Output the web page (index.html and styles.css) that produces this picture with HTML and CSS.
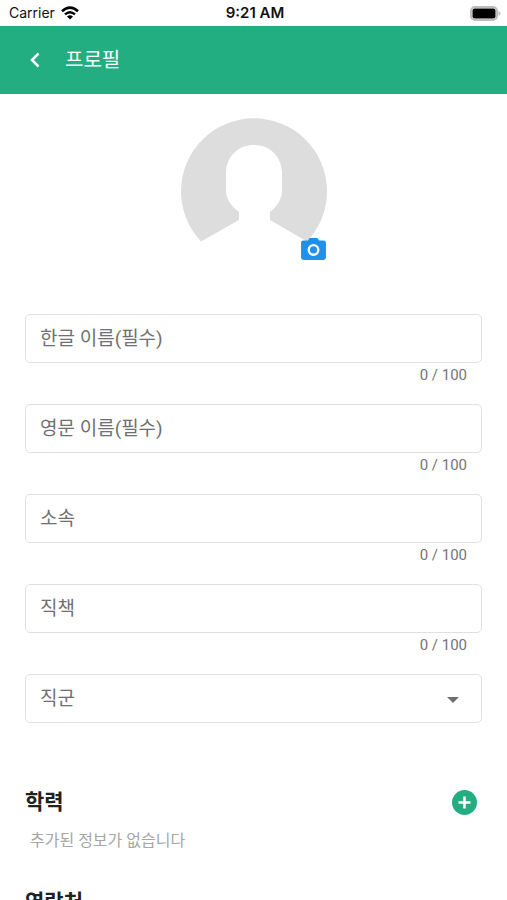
FILE: index.html
```html
<!DOCTYPE html>
<html lang="ko">
<head>
<meta charset="utf-8">
<meta name="viewport" content="width=device-width, initial-scale=1">
<title>프로필</title>
<link rel="stylesheet" href="styles.css">
</head>
<body>
<div class="app">
  <div class="status">
    <div class="carrier">
      <span>Carrier</span>
      <svg width="18" height="14" viewBox="0 0 18 14" aria-hidden="true">
        <g fill="none" stroke="#000" stroke-width="2.5">
          <path d="M1 5.200Q9-2 17 5.200"/>
          <path d="M4 8.400Q9 4 14 8.400"/>
        </g>
        <path d="M6 10.500Q9 8 12 10.500L9 13.600z"/>
      </svg>
    </div>
    <span class="time">9:21 AM</span>
    <svg class="battery" width="31" height="15" viewBox="0 0 31 15" aria-hidden="true">
      <rect x="1" y="1" width="26" height="13" rx="4" fill="#fff" stroke="#bdbdbd" stroke-width="2"/>
      <rect x="2.500" y="2.500" width="23" height="10" rx="2" fill="#000"/>
      <path d="M28.500 5q2 .8 2 2.500t-2 2.500z" fill="#bdbdbd"/>
    </svg>
  </div>
  <header class="bar">
    <button class="icon-button" type="button" aria-label="뒤로">
      <svg width="20" height="20" viewBox="0 0 20 20"><path d="M13.500 3.500L7 10l6.500 6.500" fill="none" stroke="#fff" stroke-width="2.500"/></svg>
    </button>
    <h1>프로필</h1>
  </header>
  <main>
    <div class="avatar">
      <svg width="148" height="148" viewBox="0 0 148 148" aria-hidden="true">
        <path fill="#ddd" d="M21 123.500A73 73 0 1 1 127 123.500L90 102V94C98 87 102 81 102 73V54C101 37 89 27 74 27S47 37 46 54V73C46 81 51 88 59 94V102Z"/>
      </svg>
      <button class="icon-button photo" type="button" aria-label="사진 변경">
        <svg width="25" height="22" viewBox="0 0 26 23">
          <path fill="#1f91ed" d="M7 2.500L9 0h8l2 2.500h4.500Q26 2.500 26 5v15.500Q26 23 23.500 23h-21Q0 23 0 20.500V5Q0 2.500 2.500 2.500z"/>
          <circle cx="13" cy="12.500" r="5" fill="none" stroke="#fff" stroke-width="2.500"/>
        </svg>
      </button>
    </div>
    <form>
      <div class="field">
        <input type="text" maxlength="100" placeholder="한글 이름(필수)" aria-label="한글 이름(필수)">
        <span class="count">0 / 100</span>
      </div>
      <div class="field">
        <input type="text" maxlength="100" placeholder="영문 이름(필수)" aria-label="영문 이름(필수)">
        <span class="count">0 / 100</span>
      </div>
      <div class="field">
        <input type="text" maxlength="100" placeholder="소속" aria-label="소속">
        <span class="count">0 / 100</span>
      </div>
      <div class="field">
        <input type="text" maxlength="100" placeholder="직책" aria-label="직책">
        <span class="count">0 / 100</span>
      </div>
      <div class="field choice">
        <select aria-label="직군"><option>직군</option></select>
        <svg width="12" height="6" viewBox="0 0 12 6" aria-hidden="true"><path fill="#707070" d="M0 0h12L6 6z"/></svg>
      </div>
    </form>
    <section>
      <div class="section-head">
        <h2>학력</h2>
        <button class="icon-button" type="button" aria-label="학력 추가">
          <svg width="25" height="25" viewBox="0 0 25 25"><circle cx="12.500" cy="12.500" r="12.500" fill="#22ae80"/><path d="M6.500 12.500h12M12.500 6.500v12" stroke="#fff" stroke-width="2.500"/></svg>
        </button>
      </div>
      <p>추가된 정보가 없습니다</p>
    </section>
    <section>
      <div class="section-head">
        <h2>연락처</h2>
      </div>
    </section>
  </main>
</div>
</body>
</html>
```
FILE: styles.css
```css
* {
  box-sizing: border-box;
}

body {
  margin: 0;
  background: #fff;
  color: #212121;
  font-family: Roboto, "Noto Sans CJK KR", sans-serif;
}

svg {
  display: block;
}

h1, h2, p {
  margin: 0;
}

.app {
  display: flex;
  flex-direction: column;
  height: 100vh;
}

.status {
  display: grid;
  grid-template-columns: 1fr auto 1fr;
  align-items: center;
  flex: none;
  height: 26px;
  padding: 0 6px 0 9px;
  color: #111;
  font: 14px/26px Inter, sans-serif;
}

.carrier {
  display: flex;
  align-items: center;
  gap: 6px;
}

.time {
  font-size: 15px;
  font-weight: 600;
}

.battery {
  justify-self: end;
}

.bar {
  display: flex;
  align-items: center;
  gap: 20px;
  flex: none;
  height: 68px;
  padding: 0 25px;
  background: #22ae80;
  color: #fff;
}

.bar h1 {
  font-size: 20px;
  font-weight: 400;
  line-height: 28px;
}

.icon-button {
  padding: 0;
  border: 0;
  background: none;
  cursor: pointer;
}

main {
  flex: 1;
  min-height: 0;
  padding: 24px 25px 0;
  overflow-y: auto;
  scrollbar-width: none;
}

.avatar {
  position: relative;
  width: 148px;
  margin: 0 auto 48px;
}

.photo {
  position: absolute;
  right: 2px;
  bottom: 6px;
}

.field {
  display: flex;
  flex-direction: column;
  min-height: 90px;
}

.field input,
.field select {
  width: 100%;
  height: 49px;
  margin: 0;
  padding: 0 14px;
  border: 1px solid #e0e0e0;
  border-radius: 5px;
  outline: 0;
  background: #fff;
  color: #707070;
  font: 19px/28px Roboto, "Noto Sans CJK KR", sans-serif;
  appearance: none;
}

.field input::placeholder {
  color: #707070;
  opacity: 1;
}

.count {
  align-self: flex-end;
  padding-right: 15px;
  color: #757575;
  font-size: 15px;
  line-height: 24px;
}

.choice {
  position: relative;
}

.choice svg {
  position: absolute;
  top: 23px;
  right: 23px;
  pointer-events: none;
}

form {
  margin-bottom: 20px;
}

section {
  margin-bottom: 30px;
}

.section-head {
  display: flex;
  align-items: center;
  justify-content: space-between;
  height: 36px;
  padding-right: 5px;
}

h2 {
  font-size: 21px;
  font-weight: 700;
  line-height: 30px;
}

section p {
  padding: 8px 5px 0;
  color: #a6a6a6;
  font-size: 16px;
  line-height: 26px;
}
```
